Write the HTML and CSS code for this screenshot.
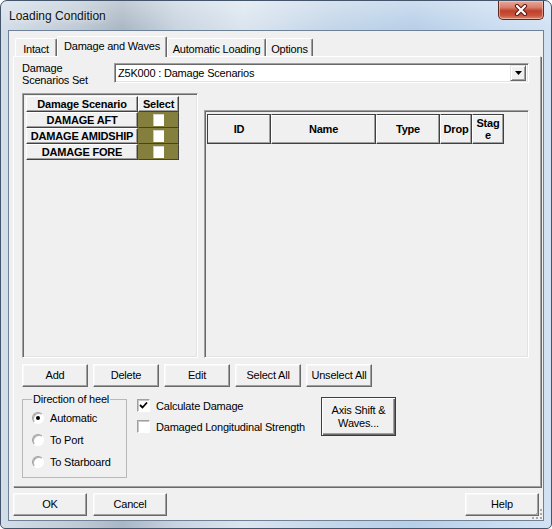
FILE: index.html
```html
<!DOCTYPE html>
<html>
<head>
<meta charset="utf-8">
<link rel="stylesheet" href="styles.css">
</head>
<body>
<div class="window">
  <div class="titlebar">
    <span class="title">Loading Condition</span>
    <div class="close">
      <svg width="16" height="12" viewBox="0 0 16 12"><path d="M4 2 L12 10 M12 2 L4 10" stroke="#5a1a12" stroke-width="4.2" stroke-linecap="round"/><path d="M4 2 L12 10 M12 2 L4 10" stroke="#ffffff" stroke-width="2.2" stroke-linecap="round"/></svg>
    </div>
  </div>
  <div class="client">
    <div class="tabs">
      <div class="tab t1">Intact</div>
      <div class="tab active t2">Damage and Waves</div>
      <div class="tab t3">Automatic Loading</div>
      <div class="tab t4">Options</div>
    </div>
    <div class="panel">
      <div class="row-set">
        <div class="set-label">Damage<br>Scenarios Set</div>
        <div class="combo">
          <span class="combo-text">Z5K000 : Damage Scenarios</span>
          <span class="combo-btn"><svg width="7" height="4" viewBox="0 0 7 4"><path d="M0 0 H7 L3.5 4 Z" fill="#000"/></svg></span>
        </div>
      </div>
      <div class="grids">
        <div class="frame left-frame">
          <div class="sgrid">
            <div class="cell hd">Damage Scenario</div>
            <div class="cell hd">Select</div>
            <div class="cell">DAMAGE AFT</div>
            <div class="cell sel"><span class="sel-box"></span></div>
            <div class="cell">DAMAGE AMIDSHIP</div>
            <div class="cell sel"><span class="sel-box"></span></div>
            <div class="cell">DAMAGE FORE</div>
            <div class="cell sel"><span class="sel-box"></span></div>
          </div>
        </div>
        <div class="right-col">
          <div class="frame right-frame">
            <div class="hdr-row">
              <div class="hc c-id">ID</div>
              <div class="hc c-name">Name</div>
              <div class="hc c-type">Type</div>
              <div class="hc c-drop">Drop</div>
              <div class="hc c-stage">Stag<br>e</div>
            </div>
          </div>
        </div>
      </div>
      <div class="btn-row">
        <div class="btn w66">Add</div>
        <div class="btn w66">Delete</div>
        <div class="btn w66">Edit</div>
        <div class="btn w66">Select All</div>
        <div class="btn w66">Unselect All</div>
      </div>
      <div class="bottom">
        <fieldset class="group">
          <legend>Direction of heel</legend>
          <div class="radio-row"><span class="radio on"></span><span>Automatic</span></div>
          <div class="radio-row"><span class="radio"></span><span>To Port</span></div>
          <div class="radio-row"><span class="radio"></span><span>To Starboard</span></div>
        </fieldset>
        <div class="checks">
          <div class="check-row"><span class="check"><svg width="9" height="9" viewBox="0 0 9 9"><path d="M1 4 L3.5 6.5 L8 1.5" stroke="#000" stroke-width="1.8" fill="none"/></svg></span><span>Calculate Damage</span></div>
          <div class="check-row"><span class="check"></span><span>Damaged Longitudinal Strength</span></div>
        </div>
        <div class="btn axis">Axis Shift &amp;<br>Waves...</div>
      </div>
    </div>
    <div class="footer">
      <div class="btn w74">OK</div>
      <div class="btn w74">Cancel</div>
      <div class="spacer"></div>
      <div class="btn w74">Help</div>
    </div>
    <svg class="grip" width="12" height="12" viewBox="0 0 12 12">
      <g fill="#a8a8a8"><rect x="9" y="1" width="2" height="2"/><rect x="5" y="5" width="2" height="2"/><rect x="9" y="5" width="2" height="2"/><rect x="1" y="9" width="2" height="2"/><rect x="5" y="9" width="2" height="2"/><rect x="9" y="9" width="2" height="2"/></g>
    </svg>
  </div>
</div>
</body>
</html>
```

FILE: styles.css
```css
html, body {
  margin: 0;
  padding: 0;
  background: #ffffff;
}

.window {
  width: 552px;
  height: 529px;
  box-sizing: border-box;
  border: 1px solid #44546a;
  border-radius: 7px 7px 5px 5px;
  padding: 0 7px 7px 7px;
  display: flex;
  flex-direction: column;
  background:
    linear-gradient(180deg, rgba(255,255,255,0.30) 0px, rgba(255,255,255,0) 28px),
    linear-gradient(90deg, #d3dee9 0%, #bfcad5 14%, #aab7c4 22%, #c8d4e0 32%, #dbe5ef 44%, #c4d6e9 60%, #b7cfe8 75%, #c9dcf0 90%, #d2e2f3 100%);
  font-family: "Liberation Sans", Arial, sans-serif;
  font-size: 11px;
  color: #000;
  overflow: hidden;
}

.titlebar {
  height: 29px;
  display: flex;
  justify-content: space-between;
  align-items: flex-start;
}

.title {
  font-size: 12px;
  margin-top: 8px;
  margin-left: 1px;
  color: #101010;
  text-shadow: 0 0 6px rgba(255,255,255,0.9);
}

.close {
  width: 46px;
  height: 19px;
  box-sizing: border-box;
  border: 1px solid #5b2a22;
  border-top: none;
  border-radius: 0 0 5px 5px;
  background: linear-gradient(180deg, #e8a898 0%, #d7806c 35%, #c0402c 55%, #c8533c 80%, #dc8a6e 100%);
  display: flex;
  align-items: center;
  justify-content: center;
  box-shadow: inset 0 0 0 1px rgba(255,220,210,0.5);
}

.client {
  flex: 1;
  position: relative;
  background: #f0f0f0;
  border: 1px solid #6f8196;
  display: flex;
  flex-direction: column;
  padding: 5px 2px 4px 4px;
  letter-spacing: -0.2px;
}

/* Tabs */
.tabs {
  display: flex;
  align-items: flex-end;
  height: 21px;
  margin-left: 2px;
  margin-bottom: -1px;
  position: relative;
  z-index: 1;
}

.tab {
  box-sizing: border-box;
  height: 18px;
  margin-bottom: 1px;
  border-top: 1px solid #ffffff;
  border-left: 1px solid #ffffff;
  border-right: 1px solid #696969;
  box-shadow: inset -1px 0 0 #a0a0a0;
  border-radius: 2px 2px 0 0;
  background: #f0f0f0;
  display: flex;
  align-items: center;
  justify-content: center;
  padding-top: 2px;
}

.tab.active {
  height: 21px;
  margin-bottom: 0;
  padding-top: 0;
  padding-bottom: 3px;
}

.t1 { width: 42px; }
.t2 { width: 110px; }
.t3 { width: 99px; }
.t4 { width: 47px; }

/* Panel */
.panel {
  box-sizing: border-box;
  height: 431px;
  border-top: 1px solid #ffffff;
  border-left: 1px solid #ffffff;
  border-right: 1px solid #a0a0a0;
  border-bottom: 1px solid #a0a0a0;
  box-shadow: 1px 1px 0 #696969;
  padding: 6px 11px 0 8px;
  display: flex;
  flex-direction: column;
}

.row-set {
  display: flex;
  height: 20px;
}

.set-label {
  width: 92px;
  line-height: 12px;
  margin-top: -1px;
}

.combo {
  flex: 1;
  box-sizing: border-box;
  height: 20px;
  border-top: 1px solid #a0a0a0;
  border-left: 1px solid #a0a0a0;
  border-right: 1px solid #ffffff;
  border-bottom: 1px solid #ffffff;
  box-shadow: inset 1px 1px 0 #696969, inset -1px -1px 0 #e3e3e3;
  background: #ffffff;
  display: flex;
  align-items: center;
  padding: 2px 2px 2px 3px;
}

.combo-text {
  flex: 1;
}

.combo-btn {
  box-sizing: border-box;
  width: 16px;
  height: 16px;
  background: #f0f0f0;
  border-top: 1px solid #e3e3e3;
  border-left: 1px solid #e3e3e3;
  border-right: 1px solid #696969;
  border-bottom: 1px solid #696969;
  box-shadow: inset 1px 1px 0 #ffffff, inset -1px -1px 0 #a0a0a0;
  display: flex;
  align-items: center;
  justify-content: center;
}

/* Grids */
.grids {
  display: flex;
  gap: 6px;
  margin-top: 10px;
  height: 265px;
}

.frame {
  box-sizing: border-box;
  border-top: 1px solid #a0a0a0;
  border-left: 1px solid #a0a0a0;
  border-right: 1px solid #ffffff;
  border-bottom: 1px solid #ffffff;
  box-shadow: inset 1px 1px 0 #696969, inset -1px -1px 0 #e3e3e3;
}

.left-frame {
  width: 176px;
  height: 265px;
  padding: 2px;
}

.sgrid {
  display: grid;
  grid-template-columns: 112px 41px;
  grid-auto-rows: 16px;
  margin: 0 0 0 1px;
}

.cell {
  box-sizing: border-box;
  border-top: 1px solid #ffffff;
  border-left: 1px solid #ffffff;
  border-right: 1px solid #404040;
  border-bottom: 1px solid #404040;
  box-shadow: inset -1px -1px 0 #a0a0a0;
  background: #f0f0f0;
  font-weight: bold;
  display: flex;
  align-items: center;
  justify-content: center;
  white-space: nowrap;
  line-height: 12px;
}

.cell.sel {
  background: #857f3e;
  border-top-color: #857f3e;
  border-left-color: #857f3e;
  box-shadow: none;
}

.sel-box {
  width: 11px;
  height: 12px;
  box-sizing: border-box;
  background: #ffffff;
  border-top: 1px solid #d8d8d0;
  border-left: 1px solid #c8c8bc;
}

.right-col {
  width: 325px;
  height: 265px;
  box-sizing: border-box;
  padding-top: 17px;
}

.right-frame {
  height: 248px;
  padding: 2px 0 0 2px;
  border-right-color: #ffffff;
}

.hdr-row {
  display: flex;
  height: 30px;
  margin-top: 1px;
}

.hc {
  box-sizing: border-box;
  height: 30px;
  border-top: 1px solid #404040;
  border-left: 1px solid #ffffff;
  border-right: 1px solid #404040;
  border-bottom: 1px solid #404040;
  box-shadow: inset -1px -1px 0 #a0a0a0, inset 0 1px 0 #ffffff;
  background: #f0f0f0;
  font-weight: bold;
  display: flex;
  align-items: center;
  justify-content: center;
  text-align: center;
  line-height: 12px;
}

.c-id { width: 64px; border-left-color: #404040; }
.c-name { width: 105px; }
.c-type { width: 64px; }
.c-drop { width: 32px; }
.c-stage { width: 32px; }

/* Buttons */
.btn {
  box-sizing: border-box;
  height: 23px;
  background: #f0f0f0;
  border-top: 1px solid #ffffff;
  border-left: 1px solid #ffffff;
  border-right: 1px solid #696969;
  border-bottom: 1px solid #696969;
  box-shadow: inset -1px -1px 0 #a0a0a0, inset 1px 1px 0 #f8f8f8;
  display: flex;
  align-items: center;
  justify-content: center;
  text-align: center;
  line-height: 13px;
}

.w66 { width: 66px; }
.w74 { width: 74px; }

.btn-row {
  display: flex;
  gap: 5px;
  margin-top: 6px;
}

/* Bottom area */
.bottom {
  display: flex;
  align-items: flex-start;
  margin-top: 6px;
}

.group {
  box-sizing: border-box;
  width: 105px;
  height: 85px;
  margin: 0;
  padding: 1px 0 0 9px;
  border: 1px solid #b8b8b8;
  border-radius: 0;
}

.group legend {
  padding: 0 1px;
  margin-left: 0px;
  line-height: 13px;
}

.radio-row {
  display: flex;
  align-items: center;
  height: 22px;
  gap: 6px;
}

.radio {
  width: 12px;
  height: 12px;
  box-sizing: border-box;
  border-radius: 50%;
  border: 1px solid;
  border-color: #a0a0a0 #ffffff #ffffff #a0a0a0;
  box-shadow: inset 1px 1px 0 #b0b0b0;
  background: #ffffff;
  display: flex;
  align-items: center;
  justify-content: center;
}

.radio.on::after {
  content: "";
  width: 4px;
  height: 4px;
  border-radius: 50%;
  background: #000;
}

.checks {
  width: 184px;
  margin-left: 10px;
  padding-top: 2px;
}

.check-row {
  display: flex;
  align-items: center;
  height: 21px;
  gap: 6px;
}

.check {
  width: 13px;
  height: 13px;
  box-sizing: border-box;
  border-top: 1px solid #a0a0a0;
  border-left: 1px solid #a0a0a0;
  border-right: 1px solid #ffffff;
  border-bottom: 1px solid #ffffff;
  box-shadow: inset 1px 1px 0 #c8c8c8;
  background: #ffffff;
  display: flex;
  align-items: center;
  justify-content: center;
}

.btn.axis {
  width: 75px;
  height: 39px;
  margin-top: 4px;
  border: 1px solid #3c3c3c;
  box-shadow: inset 1px 1px 0 #ffffff, inset -1px -1px 0 #696969, inset -2px -2px 0 #a0a0a0;
}

/* Footer */
.footer {
  display: flex;
  gap: 6px;
  margin-top: 6px;
  padding-right: 2px;
}

.spacer {
  flex: 1;
}

.grip {
  position: absolute;
  right: 0;
  bottom: 0;
}
```
